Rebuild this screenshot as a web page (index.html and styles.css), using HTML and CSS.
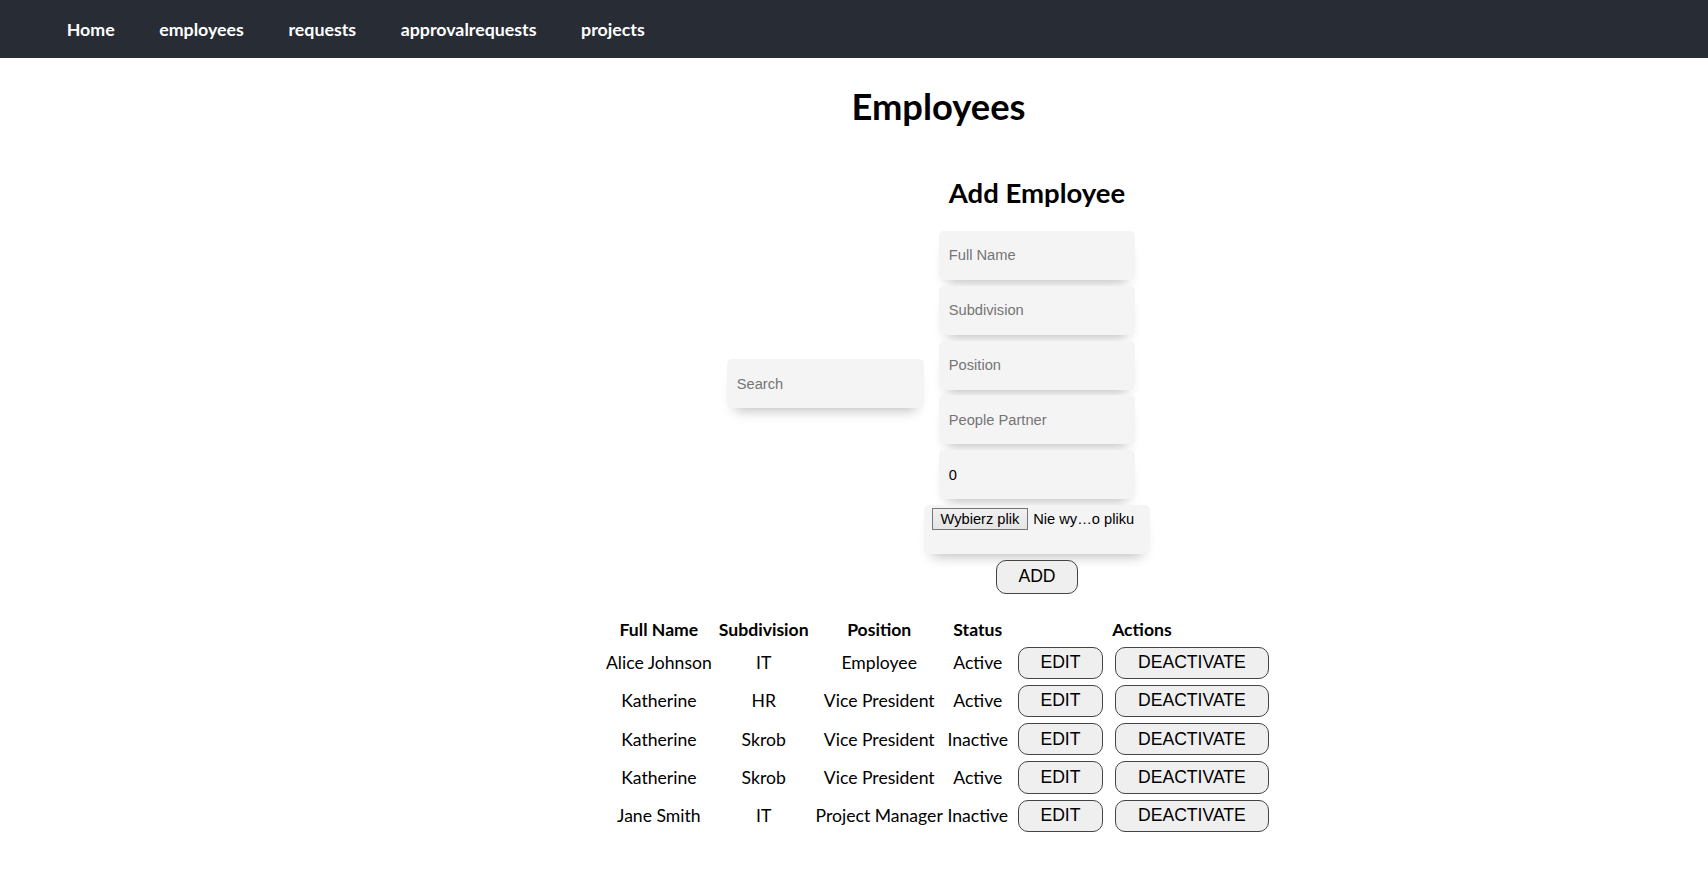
FILE: index.html
```html
<!DOCTYPE html>
<html lang="en">
<head>
<meta charset="utf-8">
<title>Employees</title>
<link rel="stylesheet" href="styles.css">
</head>
<body>
<nav class="topnav">
  <a class="topnav-link" href="#">Home</a>
  <a class="topnav-link" href="#">employees</a>
  <a class="topnav-link" href="#">requests</a>
  <a class="topnav-link" href="#">approvalrequests</a>
  <a class="topnav-link" href="#">projects</a>
</nav>
<main class="page">
  <h1 class="page-title">Employees</h1>
  <section class="editor">
    <input class="field search-field" type="text" placeholder="Search">
    <form class="add-form">
      <h2 class="form-title">Add Employee</h2>
      <input class="field" type="text" placeholder="Full Name">
      <input class="field" type="text" placeholder="Subdivision">
      <input class="field" type="text" placeholder="Position">
      <input class="field" type="text" placeholder="People Partner">
      <input class="field" type="text" value="0">
      <div class="file-box">
        <span class="file-btn">Wybierz plik</span>
        <span class="file-name">Nie wy…o pliku</span>
      </div>
      <button class="add-btn" type="button">ADD</button>
    </form>
  </section>
  <table class="staff">
    <thead>
      <tr>
        <th class="c-name">Full Name</th>
        <th class="c-sub">Subdivision</th>
        <th class="c-pos">Position</th>
        <th class="c-status">Status</th>
        <th colspan="2">Actions</th>
      </tr>
    </thead>
    <tbody>
      <tr>
        <td>Alice Johnson</td><td>IT</td><td>Employee</td><td>Active</td>
        <td><button class="row-btn edit-btn" type="button">EDIT</button></td>
        <td><button class="row-btn deact-btn" type="button">DEACTIVATE</button></td>
      </tr>
      <tr>
        <td>Katherine</td><td>HR</td><td>Vice President</td><td>Active</td>
        <td><button class="row-btn edit-btn" type="button">EDIT</button></td>
        <td><button class="row-btn deact-btn" type="button">DEACTIVATE</button></td>
      </tr>
      <tr>
        <td>Katherine</td><td>Skrob</td><td>Vice President</td><td>Inactive</td>
        <td><button class="row-btn edit-btn" type="button">EDIT</button></td>
        <td><button class="row-btn deact-btn" type="button">DEACTIVATE</button></td>
      </tr>
      <tr>
        <td>Katherine</td><td>Skrob</td><td>Vice President</td><td>Active</td>
        <td><button class="row-btn edit-btn" type="button">EDIT</button></td>
        <td><button class="row-btn deact-btn" type="button">DEACTIVATE</button></td>
      </tr>
      <tr>
        <td>Jane Smith</td><td>IT</td><td>Project Manager</td><td>Inactive</td>
        <td><button class="row-btn edit-btn" type="button">EDIT</button></td>
        <td><button class="row-btn deact-btn" type="button">DEACTIVATE</button></td>
      </tr>
    </tbody>
  </table>
</main>
</body>
</html>
```
FILE: styles.css
```css
html, body {
  margin: 0;
  padding: 0;
  background: #ffffff;
}

body {
  font-family: Lato, "Open Sans", sans-serif;
  color: #000;
}

.topnav {
  display: flex;
  align-items: center;
  gap: 44.5px;
  height: 58px;
  padding: 1px 0 0 66.7px;
  box-sizing: border-box;
  background: #282c34;
}

.topnav-link {
  color: #ffffff;
  text-decoration: none;
  font-size: 17.8px;
  font-weight: 700;
  line-height: 21px;
}

.page {
  display: flex;
  flex-direction: column;
  align-items: center;
  padding-left: 169px;
}

.page-title {
  margin: 27.4px 0 46.6px;
  font-size: 36.3px;
  line-height: 42px;
  font-weight: 700;
}

.editor {
  display: flex;
  align-items: center;
}

.add-form {
  width: 226px;
  display: flex;
  flex-direction: column;
  align-items: center;
  margin: 0;
}

.form-title {
  margin: 2.6px 0 22.7px;
  font-size: 27.5px;
  line-height: 31.7px;
  font-weight: 700;
}

.field {
  box-sizing: border-box;
  width: 196px;
  height: 49px;
  margin: 0 0 5.8px;
  padding: 0 9.8px;
  border: none;
  border-radius: 5px;
  background: #f4f4f4;
  box-shadow: 0 10px 13px -8px rgba(0, 0, 0, 0.28);
  font-family: "Liberation Sans", Arial, sans-serif;
  font-size: 14.67px;
  color: #000;
  outline: none;
}

.field::placeholder {
  color: #757575;
}

.search-field {
  width: 197px;
  margin: 0;
}

.file-box {
  box-sizing: border-box;
  width: 226px;
  height: 49px;
  margin-bottom: 5.8px;
  padding: 3px 8px;
  display: flex;
  align-items: flex-start;
  gap: 5.3px;
  border-radius: 5px;
  background: #f4f4f4;
  box-shadow: 0 10px 13px -8px rgba(0, 0, 0, 0.28);
  font-family: "Liberation Sans", Arial, sans-serif;
  font-size: 14.67px;
  color: #000;
  white-space: nowrap;
}

.file-btn {
  box-sizing: border-box;
  height: 22px;
  padding: 0 7.5px;
  border: 1px solid #767676;
  background: linear-gradient(#f0f0f0, #e5e5e5);
  line-height: 20px;
}

.file-name {
  line-height: 22px;
}

.add-btn {
  box-sizing: border-box;
  height: 34px;
  padding: 0 21.4px;
  border: 1px solid #444;
  border-radius: 10px;
  background: #efefef;
  font-family: "Liberation Sans", Arial, sans-serif;
  font-size: 17.6px;
  color: #000;
}

.staff {
  margin-top: 21.4px;
  border-spacing: 2px;
  font-size: 17.6px;
  line-height: 23.4px;
}

.staff th,
.staff td {
  padding: 1px 1.3px;
  text-align: center;
  vertical-align: middle;
  white-space: nowrap;
}

.staff th {
  font-weight: 700;
}

.c-name { width: 105px; }
.c-sub { width: 94.6px; }
.c-pos { width: 126.6px; }
.c-status { width: 57.7px; }

.row-btn {
  box-sizing: border-box;
  height: 32.3px;
  margin: 1px 2.5px 1px 5.5px;
  border: 1px solid #444;
  border-radius: 10px;
  background: #efefef;
  font-family: "Liberation Sans", Arial, sans-serif;
  font-size: 17.6px;
  color: #000;
  display: block;
}

.edit-btn {
  width: 84.4px;
  padding: 0;
}

.deact-btn {
  width: 153.4px;
  padding: 0;
}
```
